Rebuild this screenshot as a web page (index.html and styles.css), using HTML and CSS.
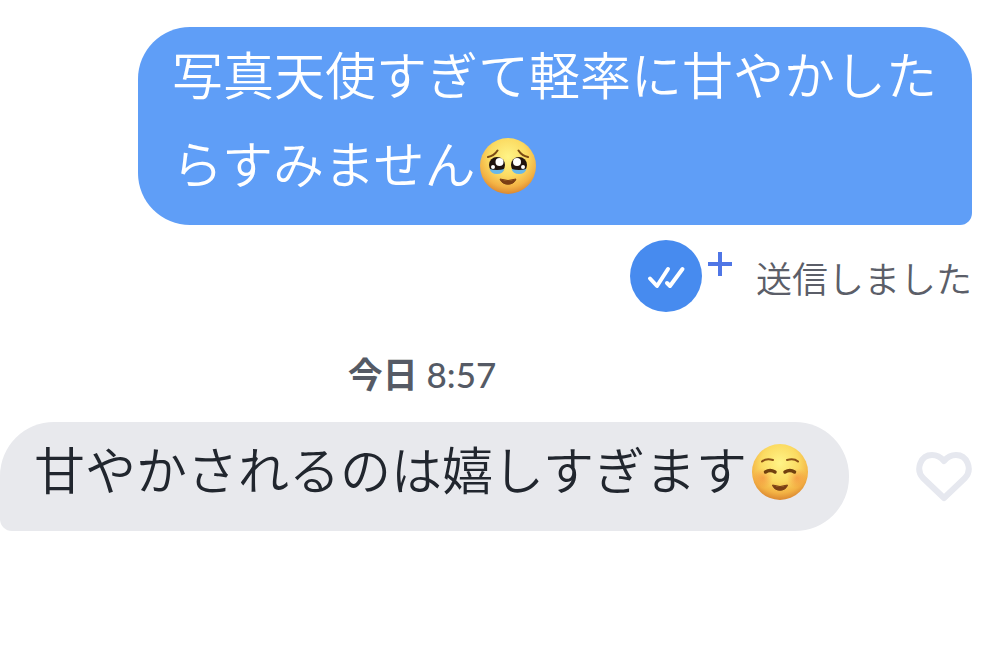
FILE: index.html
```html
<!DOCTYPE html>
<html lang="ja">
<head>
    <meta charset="UTF-8">
    <meta name="viewport" content="width=device-width, initial-scale=1.0">
    <title>メッセージ</title>
    <link rel="stylesheet" href="styles.css">
</head>
<body>
    <main class="chat">
        <!-- 送信メッセージ -->
        <div class="message sent">
            <p class="bubble">写真天使すぎて軽率に甘やかした<wbr>らすみません<svg class="emoji" viewBox="0 0 58 58" role="img" aria-label="うるうるした顔">
                <defs>
                    <radialGradient id="face" cx="50%" cy="34%" r="67%">
                        <stop offset="0" stop-color="#fff487"/>
                        <stop offset="0.5" stop-color="#fbdb62"/>
                        <stop offset="0.8" stop-color="#f3b244"/>
                        <stop offset="1" stop-color="#d98430"/>
                    </radialGradient>
                </defs>
                <circle cx="29" cy="29" r="28" fill="url(#face)"/>
                <path d="M9 20 Q15 19 18.500 13.500 M39.500 13.500 Q43 19 49 20" fill="none" stroke="#7b4a14" stroke-width="2" stroke-linecap="round"/>
                <circle cx="18" cy="28" r="8" fill="#20130f"/>
                <circle cx="40" cy="28" r="8" fill="#20130f"/>
                <path d="M10.500 32 Q18 34 25.500 32 Q24 37 18 37 Q12 37 10.500 32Z M32.500 32 Q40 34 47.500 32 Q46 37 40 37 Q34 37 32.500 32Z" fill="#69b8e8"/>
                <circle cx="20.500" cy="25" r="4" fill="#fff"/>
                <circle cx="38" cy="25" r="4" fill="#fff"/>
                <circle cx="14" cy="30" r="2" fill="#fff"/>
                <circle cx="44" cy="30" r="2" fill="#fff"/>
                <path d="M21 42 Q29 45 37 42 C35 49 23 49 21 42Z" fill="#7b3f14" stroke="#7b3f14" stroke-linejoin="round"/>
            </svg></p>
        </div>

        <!-- 送信状態 -->
        <div class="status">
            <svg class="receipt" viewBox="0 0 72 72" aria-hidden="true">
                <circle cx="36" cy="36" r="36" fill="#478bef"/>
                <path d="M20 38.500 L27 46 L38 29 M37 43 L40 46 L52.500 29" fill="none" stroke="#fff" stroke-width="4" stroke-linecap="round" stroke-linejoin="round"/>
            </svg>
            <svg class="plus" viewBox="0 0 24 24" aria-hidden="true">
                <path d="M12 0 V24 M0 12 H24" stroke="#4f76e6" stroke-width="4"/>
            </svg>
            <span class="status-text">送信しました</span>
        </div>

        <time class="date"><b>今日</b> 8:57</time>

        <!-- 受信メッセージ -->
        <div class="message received">
            <p class="bubble">甘やかされるのは嬉しすぎます<svg class="emoji" viewBox="0 0 58 58" role="img" aria-label="にっこりした顔">
                <defs>
                    <radialGradient id="blush">
                        <stop offset="0" stop-color="#f47836" stop-opacity="0.5"/>
                        <stop offset="1" stop-color="#f47836" stop-opacity="0"/>
                    </radialGradient>
                </defs>
                <circle cx="29" cy="29" r="28" fill="url(#face)"/>
                <circle cx="12" cy="35" r="10" fill="url(#blush)"/>
                <circle cx="46" cy="35" r="10" fill="url(#blush)"/>
                <path d="M11 18.500 Q15 15 22 17 M36 17 Q43 15 47 18.500" fill="none" stroke="#8a5117" stroke-width="2" stroke-linecap="round"/>
                <path d="M14.500 29 Q19 26 24 29 M34 29 Q39 26 43.500 29" fill="none" stroke="#71400f" stroke-width="3.500" stroke-linecap="round"/>
                <path d="M21.500 42 Q29 45 36.500 42 C35 49 23 49 21.500 42Z" fill="#7b3f14" stroke="#7b3f14" stroke-linejoin="round"/>
            </svg></p>
            <button class="like" type="button" aria-label="いいね">
                <svg viewBox="0 0 56 52" aria-hidden="true">
                    <path d="M28 47 L7 27 C-1 18 5 4 16 4 Q23 4 28 10 Q33 4 40 4 C51 4 57 18 49 27Z" fill="none" stroke="#e6e8ef" stroke-width="6" stroke-linejoin="round"/>
                </svg>
            </button>
        </div>
    </main>
</body>
</html>
```

FILE: styles.css
```css
body {
    margin: 0;
    background-color: #fff;
    color: #21262e;
    font-family: "Noto Sans CJK JP", sans-serif;
}

.chat {
    display: flex;
    flex-direction: column;
    padding: 27px 36px 27px 0;
}

.message {
    display: flex;
    align-items: center;
}

.bubble {
    margin: 0;
    padding: 2px 34px 18px;
    font-size: 51px;
    font-weight: 350;
    line-height: 89px;
}

.sent {
    justify-content: flex-end;
    padding-left: 138px;
}

.sent .bubble {
    background-color: #5f9ef7;
    color: #fff;
    border-radius: 52px 52px 12px 52px;
}

.received {
    justify-content: space-between;
}

.received .bubble {
    background-color: #e8e9ed;
    border-radius: 54px 54px 54px 12px;
}

.emoji {
    width: 58px;
    height: 58px;
    margin: 0 6px 0 4px;
    vertical-align: -11px;
}

/* 送信済みの表示 */
.status {
    display: flex;
    justify-content: flex-end;
    margin-top: 15px;
    color: #5b5e68;
}

.receipt {
    width: 72px;
    height: 72px;
}

.plus {
    width: 24px;
    height: 24px;
    margin: 12px 24px 0 6px;
}

.status-text {
    font-size: 36px;
    font-weight: 350;
    line-height: 74px;
}

.date {
    margin: 33px 128px 21px 0;
    color: #555a65;
    font-family: Lato, "Noto Sans CJK JP", sans-serif;
    font-size: 35px;
    font-weight: 500;
    line-height: 54px;
    text-align: center;
}

.like {
    flex: none;
    padding: 0;
    border: none;
    background: none;
    cursor: pointer;
}

.like svg {
    display: block;
    width: 56px;
    height: 52px;
}
```
